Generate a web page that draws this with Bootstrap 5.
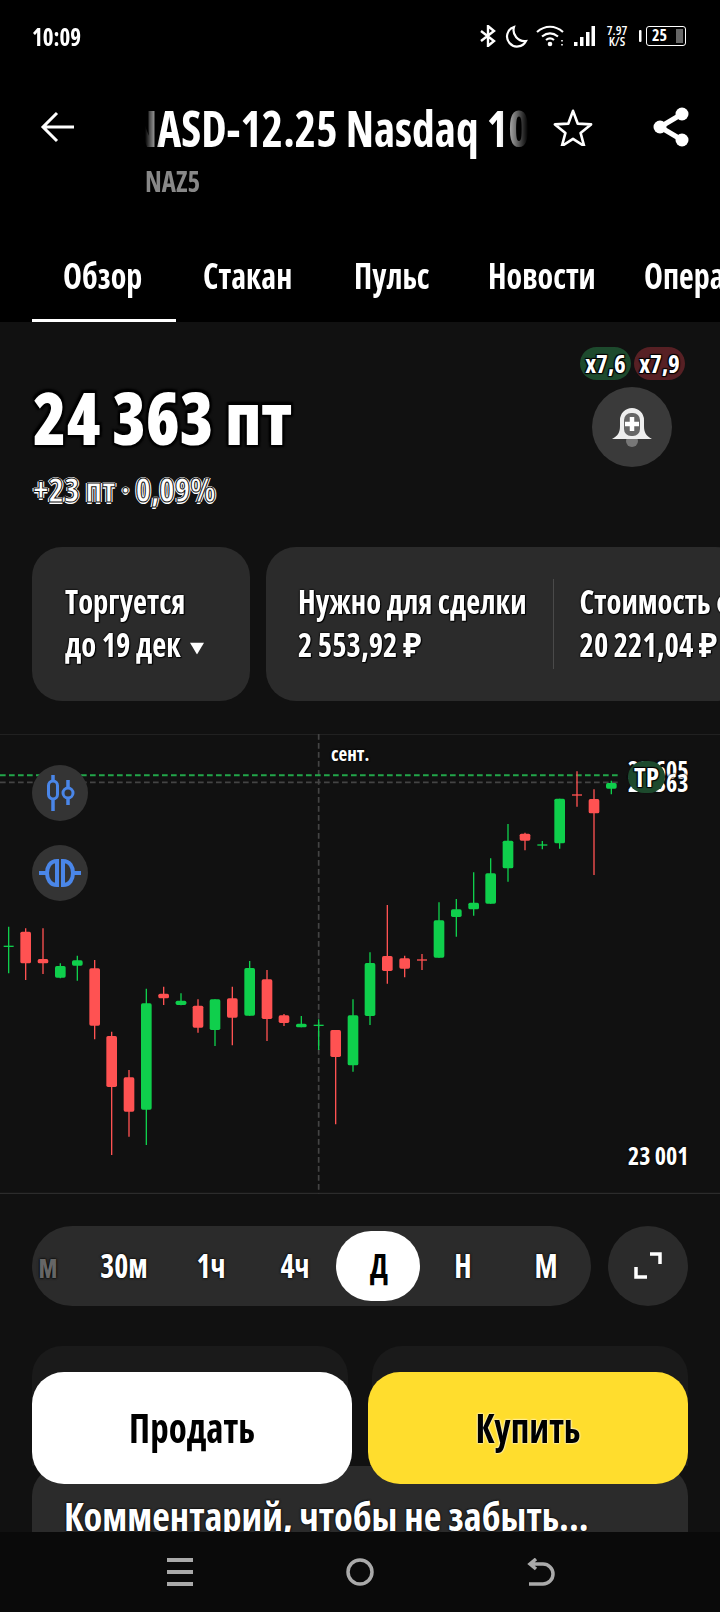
<!DOCTYPE html>
<html lang="ru">
<head>
  <meta charset="UTF-8">
  <title>NASD-12.25</title>
  <meta name="viewport" content="width=device-width, initial-scale=1.0">
  <link href="https://cdn.jsdelivr.net/npm/bootstrap@5.3.3/dist/css/bootstrap.min.css" rel="stylesheet">
  <style>
    body {
      width: 720px;
      height: 1612px;
      margin: 0;
      overflow: hidden;
      position: relative;
      background: #111;
      color: #fff;
      font-family: "Open Sans", "Noto Sans", sans-serif;
      font-stretch: 75%;
      font-weight: 700;
    }
    .top-zone { background: #000; height: 322px; overflow: hidden; }
    .status-bar { height: 72px; padding: 0 34px 0 32px; }
    .clock { font-size: 23px; display: inline-block; transform: scaleY(1.08); }
    .speed { font-size: 13px; line-height: 11px; width: 28px; text-align: center; font-weight: 600; }
    .batt { width: 40px; height: 20px; border: 1.5px solid #fff; border-radius: 3px; font-size: 16px; line-height: 17px; padding-left: 5px; position: relative; }
    .batt-fill { position: absolute; right: 2px; top: 2px; bottom: 2px; width: 7px; background: #666; }
    .title-row { height: 86px; margin-top: 12px; padding: 0 30px 0 40px; }
    .title-clip {
      width: 383px; margin-left: 71px; overflow: hidden; white-space: nowrap;
      font-size: 45.5px; line-height: 60px; text-indent: -16px;
      transform: scaleY(1.1);
      -webkit-mask-image: linear-gradient(90deg, transparent 0, #000 16px, #000 355px, transparent 383px);
      mask-image: linear-gradient(90deg, transparent 0, #000 16px, #000 355px, transparent 383px);
    }
    .ticker { font-size: 27px; line-height: 32px; color: #888; margin: -3px 0 0 145px; height: 67px; transform: scaleY(1.08); }
    .tab-row { height: 90px; margin-top: -2px; position: relative; }
    .tab-item { position: absolute; top: 22px; font-size: 32px; line-height: 44px; white-space: nowrap; transform: scaleY(1.1); }
    .tab-line { position: absolute; left: 32px; width: 144px; bottom: 0; height: 3px; background: #fff; }
    .quote-zone { height: 225px; position: relative; padding: 55px 0 0 33px; }
    .price { font-size: 68px; line-height: 80px; font-weight: 800; transform: scaleY(1.06); transform-origin: left center; text-shadow: 0 0 3px #000, 2px 2px 2px #000, -2px -2px 2px #000, 2px -2px 2px #000, -2px 2px 2px #000; }
    .delta {
      font-size: 33px; line-height: 44px; margin-top: 11px;
      -webkit-text-stroke: 1px #111;
      text-shadow: 1.500px 0 0 #fff, -1.500px 0 0 #fff, 0 1.500px 0 #fff, 0 -1.500px 0 #fff;
    }
    .chip { position: absolute; top: 25px; width: 51px; height: 33px; border-radius: 17px; font-size: 25px; line-height: 33px; text-align: center; text-shadow: 1px 1px 1px #000, -1px 1px 1px #000, 1px -1px 1px #000, -1px -1px 1px #000; }
    .chip-up { left: 580px; background: #1d4a2d; }
    .chip-down { left: 634px; background: #572024; }
    .bell-btn { position: absolute; left: 592px; top: 65px; width: 80px; height: 80px; border-radius: 50%; background: #3a3a3a; }
    .info-row { height: 154px; gap: 16px; padding-left: 32px; }
    .info-card { background: #2b2b2b; border-radius: 30px; height: 154px; flex: none; }
    .info-a { width: 218px; padding: 32px 0 0 33px; }
    .info-b { width: 480px; padding: 32px 0 0 32px; }
    .info-text { font-size: 30.600px; line-height: 40px; white-space: nowrap; transform: scaleY(1.08); transform-origin: left top; text-shadow: 0 0 2px #000, 0 0 2px #000, 1px 1px 1px #000; }
    .info-sep { width: 1px; height: 90px; background: #4a4a4a; margin: 0 26px; flex: none; }
    .chart-zone { height: 460px; margin-top: 33px; position: relative; }
    .chart-zone svg.plot { display: block; }
    .tool-btn { position: absolute; left: 32px; width: 56px; height: 56px; border-radius: 50%; background: #343434; }
    .axis-text { position: absolute; font-size: 24px; line-height: 28px; white-space: nowrap; text-shadow: 0 0 2px #000, 0 0 2px #000; }
    .tp-mark { position: absolute; left: 628px; top: 27px; width: 37px; height: 32px; border-radius: 16px; background: #1d4a2d; font-size: 27px; line-height: 32px; text-align: center; text-shadow: 1px 1px 1px #000, -1px 1px 1px #000, 1px -1px 1px #000, -1px -1px 1px #000; }
    .tf-row { padding: 32px 32px 0; gap: 17px; }
    .tf-pill { width: 559px; height: 80px; border-radius: 40px; background: #2b2b2b; position: relative; flex: none; }
    .tf-item { position: absolute; top: 18px; font-size: 30px; line-height: 44px; transform: translateX(-50%) scaleY(1.12); text-shadow: 0 0 2px #000, 0 0 2px #000; }
    .tf-on { position: absolute; left: 304px; top: 5px; width: 84px; height: 70px; border-radius: 35px; background: #fff; }
    .tf-fade { color: #666; }
    .tf-dark { color: #000; text-shadow: none; }
    .expand-btn { width: 80px; height: 80px; border-radius: 50%; background: #2b2b2b; flex: none; }
    .ghost-row { gap: 24px; padding: 40px 32px 0; }
    .ghost-card { height: 120px; flex: 1; background: #1a1a1a; border-radius: 30px 30px 0 0; }
    .note-card { position: absolute; left: 32px; top: 1466px; width: 656px; height: 100px; background: #2b2b2b; border-radius: 30px; padding: 26px 0 0 32px; font-size: 38.500px; line-height: 48px; white-space: nowrap; text-shadow: 0 0 2px #000, 0 0 2px #000; }
    .deal-btn { position: absolute; top: 1372px; height: 112px; width: 320px; border-radius: 32px; border: 0; font-size: 37px; font-weight: 700; font-family: inherit; font-stretch: inherit; color: #000; }
    .deal-btn span { display: inline-block; transform: scaleY(1.1); }
    .deal-sell { left: 32px; background: #fff; }
    .deal-buy { left: 368px; background: #ffdd2d; text-shadow: 0 0 2px #fff, 0 0 2px #fff; }
    .sys-nav { position: absolute; left: 0; right: 0; top: 1532px; height: 80px; background: #0a0a0a; }
  </style>
</head>
<body>

  <div class="top-zone">
    <div class="status-bar d-flex align-items-center justify-content-between">
      <span class="clock">10:09</span>
      <div class="d-flex align-items-center">
        <svg width="18" height="22" viewBox="0 0 18 22" fill="none" stroke="#fff" stroke-width="2.4"><path d="M2 6l13 10-6 5V1l6 5L2 16"/></svg>
        <svg class="ms-2" width="23" height="23" viewBox="0 0 23 23" fill="none" stroke="#fff" stroke-width="2.2"><path d="M9 2a10 10 0 1 0 12 14A11 11 0 0 1 9 2z"/></svg>
        <svg class="ms-2" width="30" height="22" viewBox="0 0 30 22" fill="none" stroke="#fff" stroke-width="2.2"><path d="M1 7c8-7 18-7 26 0M6 11.500c5-4 11-4 16 0M10 15c2.500-2 5.500-2 8 0"/><circle cx="14" cy="19" r="2.300" fill="#fff" stroke="none"/><path d="M26 15v1.500M26 19v1.500" stroke-width="1.600"/></svg>
        <svg class="ms-2" width="21" height="22" viewBox="0 0 21 22" fill="#fff"><rect x="0" y="17" width="3.500" height="4"/><rect x="6" y="12" width="3.500" height="9"/><rect x="12" y="7" width="3.500" height="14"/><rect x="17.500" y="1" width="3.500" height="20"/></svg>
        <div class="speed ms-2">7.97<br>K/S</div>
        <svg class="ms-2" width="3" height="12" viewBox="0 0 3 12" fill="#fff"><rect width="2.500" height="12" rx="1"/></svg>
        <div class="batt ms-1">25<span class="batt-fill"></span></div>
      </div>
    </div>
    <div class="title-row d-flex align-items-center">
      <svg width="34" height="32" viewBox="0 0 34 32" fill="none" stroke="#fff" stroke-width="3"><path d="M17 2L3 16l14 14M3 16h31"/></svg>
      <div class="title-clip">NASD-12.25 Nasdaq 100</div>
      <svg class="ms-auto" width="40" height="38" viewBox="0 0 42 40" fill="none" stroke="#fff" stroke-width="2.800"><path d="M21 3l5 13.500 14 .8-11 9 3.700 13.700L21 32.500 9.300 40 13 26.300l-11-9 14-.8z" stroke-linejoin="round"/></svg>
      <svg style="margin-left:59px" width="38" height="40" viewBox="0 0 38 40"><path d="M30 7L8 20l22 13" fill="none" stroke="#fff" stroke-width="5"/><circle cx="30" cy="7" r="6.500" fill="#fff"/><circle cx="8" cy="20" r="6.500" fill="#fff"/><circle cx="30" cy="33" r="6.500" fill="#fff"/></svg>
    </div>
    <div class="ticker">NAZ5</div>
    <div class="tab-row">
      <span class="tab-item" style="left:63px">Обзор</span>
      <span class="tab-item" style="left:203px">Стакан</span>
      <span class="tab-item" style="left:354px">Пульс</span>
      <span class="tab-item" style="left:488px">Новости</span>
      <span class="tab-item" style="left:644px">Операции</span>
      <span class="tab-line"></span>
    </div>
  </div>

  <div class="quote-zone">
    <div class="price">24 363 пт</div>
    <div class="delta">+23 пт · 0,09%</div>
    <span class="chip chip-up">x7,6</span>
    <span class="chip chip-down">x7,9</span>
    <div class="bell-btn d-flex align-items-center justify-content-center">
      <svg width="42" height="42" viewBox="0 0 42 42"><circle cx="21" cy="35" r="6" fill="#777"/><path d="M1 33c6-3 8-7 8-13V14a12 12 0 0 1 24 0v6c0 6 2 10 8 13z" fill="#eee"/><rect x="13" y="7" width="16" height="23" rx="7" fill="#666"/><path d="M21 11v14M14 18h14" stroke="#fff" stroke-width="4.500"/></svg>
    </div>
  </div>

  <div class="info-row d-flex overflow-hidden">
    <div class="info-card info-a">
      <div class="info-text">Торгуется<br>до 19 дек <svg class="ms-1" width="14" height="12" viewBox="0 0 14 12" fill="#fff"><path d="M0 1h14L7 12z"/></svg></div>
    </div>
    <div class="info-card info-b d-flex">
      <div class="info-text">Нужно для сделки<br>2 553,92 ₽</div>
      <div class="info-sep"></div>
      <div class="info-text">Стоимость фьючерса<br>20 221,04 ₽</div>
    </div>
  </div>

  <div class="chart-zone">
    <svg class="plot" id="plot" width="720" height="460" viewBox="0 12 2160 1380"></svg>
    <span class="axis-text" style="left:331px;top:6px;font-size:19px">сент.</span>
    <span class="axis-text" style="left:628px;top:22px">23 605</span>
    <span class="axis-text" style="left:628px;top:35px">24 363</span>
    <span class="tp-mark">TP</span>
    <span class="axis-text" style="left:628px;top:408px">23 001</span>
    <div class="tool-btn d-flex align-items-center justify-content-center" style="top:31px">
      <svg width="30" height="36" viewBox="0 0 30 36" fill="none" stroke="#4a86e8" stroke-width="3"><path d="M8 0v36" stroke-width="3.500"/><rect x="3.500" y="6" width="9" height="18" rx="4.500" fill="#343434"/><path d="M23 5v25" stroke-width="3.500"/><circle cx="23" cy="18" r="5" fill="#343434"/></svg>
    </div>
    <div class="tool-btn d-flex align-items-center justify-content-center" style="top:111px">
      <svg width="42" height="28" viewBox="0 0 42 28" fill="none" stroke="#4a86e8" stroke-width="4"><path d="M0 14h10M32 14h10"/><path d="M18 2C11 2 8 8 8 14s3 12 10 12z"/><path d="M24 2c7 0 10 6 10 12s-3 12-10 12z"/></svg>
    </div>
  </div>

  <div class="tf-row d-flex">
    <div class="tf-pill">
      <span class="tf-on"></span>
      <span class="tf-item tf-fade" style="left:16px">м</span>
      <span class="tf-item" style="left:92px">30м</span>
      <span class="tf-item" style="left:179px">1ч</span>
      <span class="tf-item" style="left:263px">4ч</span>
      <span class="tf-item tf-dark" style="left:347px">Д</span>
      <span class="tf-item" style="left:431px">Н</span>
      <span class="tf-item" style="left:514px">М</span>
    </div>
    <div class="expand-btn d-flex align-items-center justify-content-center">
      <svg width="28" height="28" viewBox="0 0 28 28" fill="none" stroke="#fff" stroke-width="3.500"><path d="M16 2h10v10M2 15v10h11"/></svg>
    </div>
  </div>

  <div class="ghost-row d-flex">
    <div class="ghost-card"></div>
    <div class="ghost-card"></div>
  </div>
  <div class="note-card">Комментарий, чтобы не забыть...</div>
  <button class="deal-btn deal-sell"><span>Продать</span></button>
  <button class="deal-btn deal-buy"><span>Купить</span></button>

  <div class="sys-nav">
    <svg class="position-absolute" style="left:167px;top:26px" width="26" height="28" viewBox="0 0 26 28" fill="#aaa"><rect width="26" height="4"/><rect y="12" width="26" height="4"/><rect y="24" width="26" height="4"/></svg>
    <svg class="position-absolute" style="left:346px;top:26px" width="28" height="28" viewBox="0 0 28 28" fill="none" stroke="#aaa" stroke-width="3.500"><circle cx="14" cy="14" r="12"/></svg>
    <svg class="position-absolute" style="left:527px;top:26px" width="28" height="28" viewBox="0 0 28 28" fill="none" stroke="#aaa" stroke-width="3.500"><path d="M2 26h14a10 10 0 0 0 0-20H3M9 1L3 6l6 5"/></svg>
  </div>

  <script>
    // x, wick top, wick bottom, body top, body bottom, 1 = green
    // coordinates are 3x page px, y counted from 730
    const свечи = [
      [26,590,730,649,649,1],[77,595,750,605,700,0],[129,595,732,687,700,0],[181,700,745,708,743,1],
      [232,677,752,691,707,1],[284,690,928,715,887,0],[335,905,1275,918,1071,0],[387,1020,1220,1042,1145,0],
      [439,776,1245,820,1139,1],[491,770,825,791,805,0],[543,790,826,812,825,1],[594,808,908,827,893,0],
      [645,808,948,808,900,1],[697,770,946,805,863,0],[749,693,857,714,857,1],[801,720,933,748,867,0],
      [852,852,888,856,879,0],[904,858,892,881,892,1],[956,868,960,886,886,1],[1007,900,1183,900,981,0],
      [1059,808,1025,856,1006,1],[1110,667,885,699,858,1],[1162,525,761,678,723,0],[1214,677,742,685,716,0],
      [1266,672,720,690,690,0],[1317,517,683,571,683,1],[1369,507,620,538,561,1],[1421,427,557,518,538,1],
      [1472,385,521,430,521,1],[1524,282,455,332,415,1],[1575,308,361,311,332,0],[1627,333,358,345,345,1],
      [1679,206,356,206,340,1],[1731,124,230,195,195,0],[1782,178,435,207,250,0],[1834,152,193,159,176,1]
    ];
    let svg = '';
    svg += '<path d="M0 12H2160M0 1390H2160" stroke="#333" stroke-width="3"/>';
    svg += '<path d="M956 12V1390" stroke="#444" stroke-width="5" stroke-dasharray="17 10"/>';
    svg += '<path d="M0 157H1860" stroke="#444" stroke-width="5" stroke-dasharray="17 10"/>';
    svg += '<path d="M0 136H1860" stroke="#22a64a" stroke-width="6" stroke-dasharray="17 10"/>';
    свечи.forEach(([x, wt, wb, bt, bb, up]) => {
      const c = up ? '#0fcf4c' : '#ff5252';
      svg += `<path d="M${x} ${wt}V${wb}" stroke="${c}" stroke-width="4"/>`;
      if (bt === bb) {
        svg += `<path d="M${x - 15} ${bt}H${x + 15}" stroke="${c}" stroke-width="4"/>`;
      } else {
        svg += `<rect x="${x - 16}" y="${bt}" width="32" height="${bb - bt}" rx="5" fill="${c}"/>`;
      }
    });
    document.getElementById('plot').innerHTML = svg;
  </script>
  <script src="https://cdn.jsdelivr.net/npm/bootstrap@5.3.3/dist/js/bootstrap.bundle.min.js"></script>
</body>
</html>
